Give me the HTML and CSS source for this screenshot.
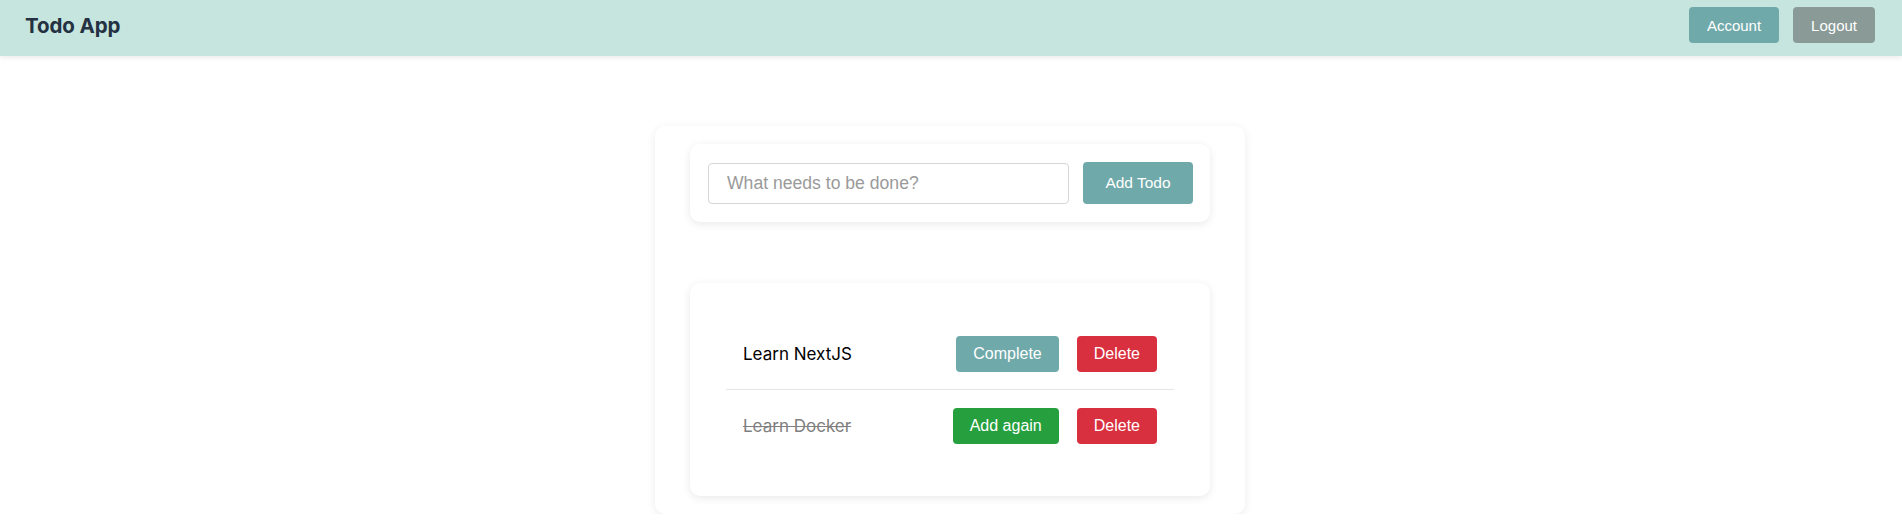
FILE: index.html
```html
<!DOCTYPE html>
<html lang="en">
<head>
<meta charset="utf-8">
<title>Todo App</title>
<link rel="stylesheet" href="styles.css">
</head>
<body>
<header class="topbar">
  <div class="brand">Todo App</div>
  <nav class="nav">
    <button class="btn btn-nav btn-teal">Account</button>
    <button class="btn btn-nav btn-gray">Logout</button>
  </nav>
</header>
<main class="main">
  <section class="panel">
    <form class="card add-form">
      <input class="todo-input" type="text" placeholder="What needs to be done?">
      <button type="button" class="btn btn-add btn-teal">Add Todo</button>
    </form>
    <div class="card list-card">
      <ul class="todo-list">
        <li class="todo-row">
          <span class="todo-text">Learn NextJS</span>
          <span class="actions">
            <button class="btn btn-item btn-teal">Complete</button>
            <button class="btn btn-item btn-red">Delete</button>
          </span>
        </li>
        <li class="todo-row">
          <span class="todo-text done">Learn Docker</span>
          <span class="actions">
            <button class="btn btn-item btn-green">Add again</button>
            <button class="btn btn-item btn-red">Delete</button>
          </span>
        </li>
      </ul>
    </div>
  </section>
</main>
</body>
</html>
```
FILE: styles.css
```css
* { box-sizing: border-box; }
html, body { margin: 0; padding: 0; background: #ffffff; }
body { font-family: "Liberation Sans", Arial, sans-serif; color: #000; }

.topbar {
  height: 56px;
  background: #c6e5df;
  display: flex;
  align-items: center;
  justify-content: space-between;
  padding: 0 27px 6px 25px;
  box-shadow: 0 2px 5px rgba(0, 0, 0, 0.08);
}
.brand {
  font-family: Inter, "Noto Sans", sans-serif;
  font-weight: 700;
  font-size: 20.5px;
  color: #243142;
  letter-spacing: -0.1px;
}
.nav { display: flex; gap: 14px; }

.btn {
  border: none;
  border-radius: 4px;
  color: #fff;
  font-family: "Liberation Sans", Arial, sans-serif;
  cursor: pointer;
  display: inline-flex;
  align-items: center;
  justify-content: center;
}
.btn-nav { height: 36px; padding: 0 18px; font-size: 15px; }
.btn-teal { background: #6fa9a9; }
.btn-gray { background: #8a9a97; }
.btn-red { background: #d9303f; }
.btn-green { background: #26a03f; }

.main { display: flex; justify-content: center; padding-top: 70px; padding-right: 2px; }
.panel {
  width: 590px;
  background: #fff;
  border-radius: 10px;
  padding: 18px 35px;
  box-shadow: 0 2px 10px rgba(0, 0, 0, 0.08);
  display: flex;
  flex-direction: column;
  gap: 61px;
}
.card {
  background: #fff;
  border-radius: 10px;
  box-shadow: 0 2px 8px rgba(0, 0, 0, 0.09);
}
.add-form {
  margin: 0;
  display: flex;
  align-items: center;
  gap: 14px;
  padding: 18px 17px 18px 18px;
}
.todo-input {
  flex: 1;
  height: 41px;
  border: 1.5px solid #d6d6d6;
  border-radius: 4px;
  padding: 0 18px;
  font-family: "Liberation Sans", Arial, sans-serif;
  font-size: 17.6px;
  color: #333;
  outline: none;
}
.todo-input::placeholder { color: #9a9a9a; }
.btn-add { width: 110px; height: 42px; font-size: 15.5px; padding: 0; }

.list-card { padding: 35px 36px 35px 36px; }
.todo-list { list-style: none; margin: 0; padding: 0; }
.todo-row {
  height: 71px;
  display: flex;
  align-items: center;
  justify-content: space-between;
  padding: 0 17px;
}
.todo-row + .todo-row { border-top: 1px solid #e6e6e6; height: 72px; }
.todo-text {
  font-family: Inter, "Noto Sans", sans-serif;
  font-size: 17px;
  color: #000;
}
.todo-text.done { color: #808080; text-decoration: line-through; }
.actions { display: flex; gap: 18px; }
.btn-item { height: 36px; padding: 0 17px; font-size: 16px; }
```
